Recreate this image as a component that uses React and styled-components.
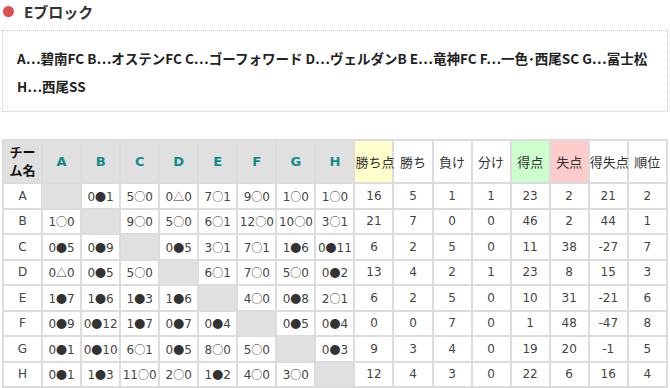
import React from 'react';
import styled, { createGlobalStyle } from 'styled-components';

const GlobalStyle = createGlobalStyle`
  body {
    margin: 0;
    background: #fff;
    font-family: 'DejaVu Sans', 'Noto Sans CJK JP', sans-serif;
    color: #333;
  }
`;

const Page = styled.div`
  padding: 0 2px;
`;

const Title = styled.h3`
  display: flex;
  align-items: center;
  gap: 10px;
  height: 20px;
  margin: 1px 0 0;
  font-family: 'Noto Sans CJK JP', sans-serif;
  font-size: 15px;
  font-weight: bold;
  color: #333;
  &::before {
    content: '';
    width: 11px;
    height: 11px;
    margin-left: 1px;
    border-radius: 50%;
    background: #dd4f4f;
  }
`;

const TeamBox = styled.div`
  margin-top: 9px;
  border: 1px dotted #c8c8c8;
  padding: 13px 12px 11px 14px;
  font-family: 'Noto Sans CJK JP', sans-serif;
  font-size: 13.5px;
  font-weight: bold;
  line-height: 28px;
  color: #222;
`;

const TeamItem = styled.span`
  white-space: nowrap;
`;

const Table = styled.table`
  margin-top: 27px;
  width: 100%;
  table-layout: fixed;
  border-collapse: collapse;
  font-size: 12px;
  color: #444;
`;

const Head = styled.th`
  height: 41px;
  padding: 0;
  border: 2px solid #dcdcdc;
  background: ${(p) => p.$bg || '#fff'};
  color: ${(p) => (p.$team ? '#138a8a' : '#333')};
  font-size: 13px;
  font-weight: ${(p) => (p.$team || p.$strong ? 'bold' : 'normal')};
  ${(p) => p.$strong && 'color: #111; line-height: 18px;'}
  text-align: center;
  white-space: ${(p) => (p.$strong ? 'normal' : 'nowrap')};
`;

const Cell = styled.td`
  height: 23.5px;
  padding: 0;
  border: 2px solid #dcdcdc;
  background: ${(p) => (p.$diag ? '#e0e0e0' : '#fff')};
  text-align: center;
  white-space: nowrap;
`;

const Mark = styled.span`
  font-family: 'Noto Sans CJK JP', sans-serif;
  font-size: 11px;
  color: #333;
`;

const teams = [
  ['A', '碧南FC'],
  ['B', 'オステンFC'],
  ['C', 'ゴーフォワード'],
  ['D', 'ヴェルダンB'],
  ['E', '竜神FC'],
  ['F', '一色･西尾SC'],
  ['G', '冨士松'],
  ['H', '西尾SS'],
];

const stats = [
  { label: '勝ち点', bg: '#ffffcc' },
  { label: '勝ち' },
  { label: '負け' },
  { label: '分け' },
  { label: '得点', bg: '#ccffcc' },
  { label: '失点', bg: '#ffcccc' },
  { label: '得失点' },
  { label: '順位' },
];

const rows = [
  ['A', [null, '0●1', '5○0', '0△0', '7○1', '9○0', '1○0', '1○0'], [16, 5, 1, 1, 23, 2, 21, 2]],
  ['B', ['1○0', null, '9○0', '5○0', '6○1', '12○0', '10○0', '3○1'], [21, 7, 0, 0, 46, 2, 44, 1]],
  ['C', ['0●5', '0●9', null, '0●5', '3○1', '7○1', '1●6', '0●11'], [6, 2, 5, 0, 11, 38, -27, 7]],
  ['D', ['0△0', '0●5', '5○0', null, '6○1', '7○0', '5○0', '0●2'], [13, 4, 2, 1, 23, 8, 15, 3]],
  ['E', ['1●7', '1●6', '1●3', '1●6', null, '4○0', '0●8', '2○1'], [6, 2, 5, 0, 10, 31, -21, 6]],
  ['F', ['0●9', '0●12', '1●7', '0●7', '0●4', null, '0●5', '0●4'], [0, 0, 7, 0, 1, 48, -47, 8]],
  ['G', ['0●1', '0●10', '6○1', '0●5', '8○0', '5○0', null, '0●3'], [9, 3, 4, 0, 19, 20, -1, 5]],
  ['H', ['0●1', '1●3', '11○0', '2○0', '1●2', '4○0', '3○0', null], [12, 4, 3, 0, 22, 6, 16, 4]],
];

const Result = ({ value }) => {
  const [, home, mark, away] = value.match(/^(\d+)(.)(\d+)$/);
  return (
    <>
      {home}
      <Mark>{mark}</Mark>
      {away}
    </>
  );
};

export default function App() {
  return (
    <Page>
      <GlobalStyle />
      <Title>Eブロック</Title>
      <TeamBox>
        {teams.map(([key, name], i) => (
          <React.Fragment key={key}>
            {i > 0 && ' '}
            <TeamItem>
              {key}…{name}
            </TeamItem>
          </React.Fragment>
        ))}
      </TeamBox>
      <Table>
        <thead>
          <tr>
            <Head $bg="#e0e0e0" $strong>
              チーム名
            </Head>
            {teams.map(([key]) => (
              <Head key={key} $bg="#e0e0e0" $team>
                {key}
              </Head>
            ))}
            {stats.map((s) => (
              <Head key={s.label} $bg={s.bg}>
                {s.label}
              </Head>
            ))}
          </tr>
        </thead>
        <tbody>
          {rows.map(([key, results, nums]) => (
            <tr key={key}>
              <Cell>{key}</Cell>
              {results.map((r, i) => (
                <Cell key={i} $diag={r === null}>
                  {r && <Result value={r} />}
                </Cell>
              ))}
              {nums.map((n, i) => (
                <Cell key={'n' + i}>{n}</Cell>
              ))}
            </tr>
          ))}
        </tbody>
      </Table>
    </Page>
  );
}
